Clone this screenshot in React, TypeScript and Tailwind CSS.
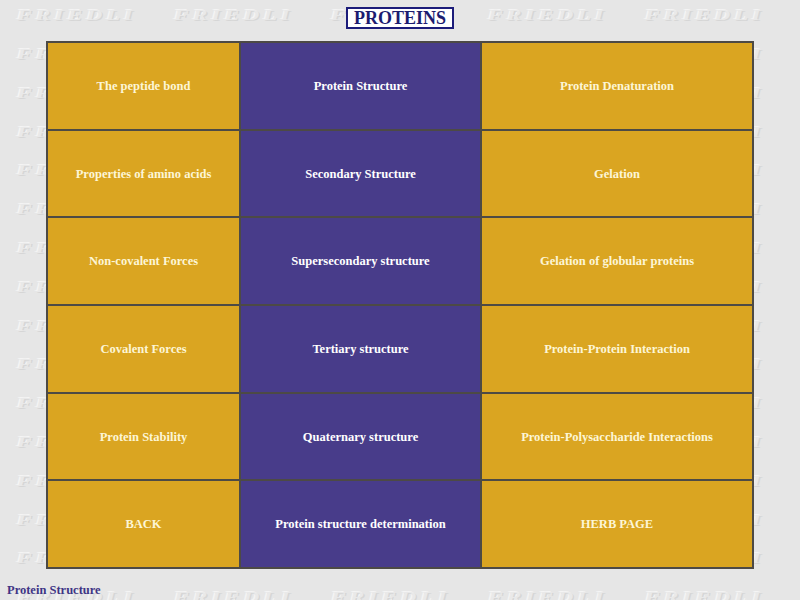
import React from 'react'

const cells: [string, string, string][] = [
  ['The peptide bond', 'Protein Structure', 'Protein Denaturation'],
  ['Properties of amino acids', 'Secondary Structure', 'Gelation'],
  ['Non-covalent Forces', 'Supersecondary structure', 'Gelation of globular proteins'],
  ['Covalent Forces', 'Tertiary structure', 'Protein-Protein Interaction'],
  ['Protein Stability', 'Quaternary structure', 'Protein-Polysaccharide Interactions'],
  ['BACK', 'Protein structure determination', 'HERB PAGE']
]

const serif = "font-['Liberation_Serif','Times_New_Roman',serif]"

// faint embossed "FRIEDLI" tiles behind the page
function Watermark() {
  const tiles = Array.from({ length: 6 * 16 })
  return (
    <div className="absolute inset-0 overflow-hidden pointer-events-none">
      <div className="flex flex-wrap w-[942px] pl-[17px] -mt-[4px]">
        {tiles.map((_, i) => (
          <div key={i} className="w-[157px] h-[38.8px] flex items-center">
            <span
              className={`${serif} inline-block origin-left scale-x-[1.45] font-bold italic text-[15px] tracking-[3px] text-[#e9e9e9] [text-shadow:1px_1px_0_#d6d6d6,-1px_-1px_0_#f4f4f4]`}
            >
              FRIEDLI
            </span>
          </div>
        ))}
      </div>
    </div>
  )
}

export default function App() {
  return (
    <div className={`relative w-[800px] h-[600px] bg-[#e6e6e6] overflow-hidden ${serif}`}>
      <Watermark />
      <div className="relative flex flex-col items-center">
        <div className="mt-[7px] border-2 border-[#1c1c7a] bg-white px-[6px] text-[18px] leading-[18px] font-bold text-[#1c1c70]">
          PROTEINS
        </div>
        <div className="mt-[12px] grid grid-cols-[191px_239px_270px] grid-rows-[repeat(6,1fr)] h-[528px] gap-[2px] border-2 border-[#4d4a45] bg-[#4d4a45]">
          {cells.map((row, r) =>
            row.map((label, c) => (
              <div
                key={`${r}-${c}`}
                className={
                  c === 1
                    ? 'flex items-center justify-center pt-px bg-[#483c8a] text-white text-[12.5px] font-bold'
                    : 'flex items-center justify-center pt-px bg-[#daa521] text-[#fdf6d6] text-[12.5px] font-bold'
                }
              >
                {label}
              </div>
            ))
          )}
        </div>
      </div>
      <div className="relative mt-[12px] pl-[7px] text-[12.5px] font-bold text-[#3f3585]">
        Protein Structure
      </div>
    </div>
  )
}
